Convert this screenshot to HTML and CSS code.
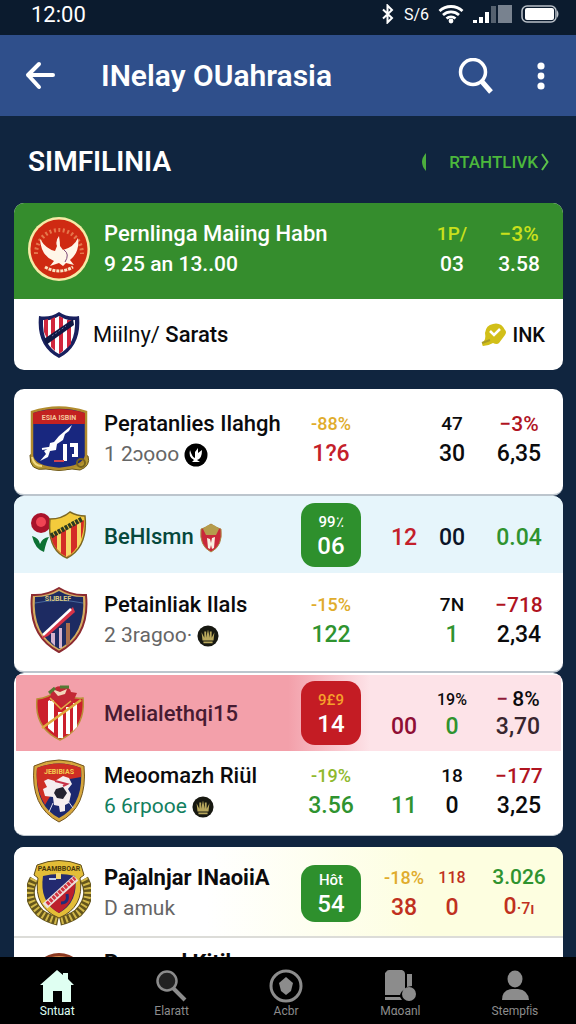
FILE: index.html
```
<!DOCTYPE html>
<html lang="id">
<head>
    <meta charset="UTF-8">
    <meta name="viewport" content="width=device-width, initial-scale=1.0">
    <title>INelay OUahrasia</title>
    <link rel="stylesheet" href="styles.css">
</head>
<body>

<div class="status-bar">
    <span class="clock">12:00</span>
    <div class="status-icons">
        <svg width="14" height="20" viewBox="0 0 14 20"><path d="M2 5.500l9 8.500-4.500 4.500V1.500L11 6l-9 8.500" fill="none" stroke="#fff" stroke-width="2"/></svg>
        <span class="network">S/6</span>
        <svg width="26" height="20" viewBox="0 0 26 20">
            <path d="M1.500 7a17 17 0 0 1 23 0M5 11a12 12 0 0 1 16 0M8.500 14.500a7 7 0 0 1 9 0" fill="none" stroke="#fff" stroke-width="2.800"/>
            <circle cx="13" cy="17" r="2.400" fill="#fff"/>
        </svg>
        <svg width="39" height="20" viewBox="0 0 39 20">
            <path d="M0 16h4v3H0zM6 13h4v6H6zM12 8h4v11h-4z" fill="#fff"/>
            <path d="M18 2h5v17h-5z" fill="#55616f"/>
            <path d="M25 1h14v18H25z" fill="#78828f"/>
        </svg>
        <svg class="battery" width="39" height="20" viewBox="0 0 39 20">
            <rect x="1" y="2" width="34" height="16" rx="5" fill="none" stroke="#b9c0c8" stroke-width="1.500"/>
            <rect x="4" y="4" width="29" height="12" rx="2" fill="#fff"/>
            <path d="M36 6q3 4 0 8z" fill="#b9c0c8"/>
        </svg>
    </div>
</div>

<header class="app-bar">
    <button class="icon-btn back" aria-label="Back">
        <svg width="30" height="30" viewBox="0 0 30 30"><path d="M14 3L3 14l11 12M3 14h25" fill="none" stroke="#fff" stroke-width="4" stroke-linejoin="round" stroke-linecap="round"/></svg>
    </button>
    <h1>INelay OUahrasia</h1>
    <button class="icon-btn search" aria-label="Search">
        <svg width="36" height="36" viewBox="0 0 36 36"><circle cx="15" cy="14" r="12.500" fill="none" stroke="#fff" stroke-width="3.500"/><path d="M23 22.500L33 34" stroke="#fff" stroke-width="5"/></svg>
    </button>
    <button class="icon-btn more" aria-label="More">
        <svg width="10" height="30" viewBox="0 0 10 30" fill="#fff"><circle cx="5" cy="5" r="3.600"/><circle cx="5" cy="15" r="3.400"/><circle cx="5" cy="25" r="3.600"/></svg>
    </button>
</header>

<main>
    <div class="section-head">
        <h2>SIMFILINIA</h2>
        <a href="#" class="live">
            <svg width="6" height="20" viewBox="0 0 6 20"><path d="M5 1Q-3 10 5 19z" fill="#4cae3e"/></svg>
            <span>RTAHTLIVK</span>
            <svg width="8" height="18" viewBox="0 0 8 18"><path d="M1 1l5.500 8L1 17" fill="none" stroke="#5cc34a" stroke-width="2"/></svg>
        </a>
    </div>

    <section class="card">
        <div class="row featured">
            <svg class="crest" width="64" height="66" viewBox="0 0 64 66">
                <ellipse cx="32" cy="33" rx="31" ry="32" fill="#f6eaa6"/>
                <ellipse cx="32" cy="33" rx="28.500" ry="29.500" fill="#cf2a12"/>
                <path d="M9 38A23 24 0 1 1 55 38" fill="none" stroke="#e5774c" stroke-width="4" stroke-dasharray="2 2.500"/>
                <path d="M13 23q6 10 15 12l2-5q-2-5 2-10 1 6 1 10l3 4q11-3 15-12 2 14-8 22l4 5-8-2-3 3-4-3-9 3 4-5q-13-5-14-22z" fill="#fff6e8"/>
                <path d="M37 34q6 4 1 12" fill="none" stroke="#7c4a78"/>
                <path d="M18 51q14 8 28 0" fill="none" stroke="#fbe3c0" stroke-width="3" stroke-dasharray="3 1"/>
            </svg>
            <div class="team">
                <div class="name">Pernlinga Maiing Habn</div>
                <div class="sub">9 25 an 13..00</div>
            </div>
            <div class="stat c3"><span class="lime">1P/</span><span>03</span></div>
            <div class="stat c4"><span class="lime">−3%</span><span>3.58</span></div>
        </div>
        <div class="row match">
            <svg class="crest" width="44" height="48" viewBox="0 0 44 48">
                <path d="M2 5q11 2 20-4 9 6 20 4 3 30-20 42Q-1 35 2 5z" fill="#18205e"/>
                <path d="M6 9q9 1 16-4 7 5 16 4 1 25-16 34Q5 34 6 9z" fill="#fff"/>
                <path d="M7 9l4-1v22l-4-9zM14 8l4-2v34l-4-4zM22 5l4 2v33l-4 3zM30 9l4 0v24l-4 4z" fill="#d1263c"/>
                <path d="M7 28L36 8l1 6L9 34z" fill="#101844"/>
                <path d="M15 25l14-10" stroke="#6974a4" stroke-dasharray="2 2"/>
            </svg>
            <div class="team"><div class="name">Miilny/ <b>Sarats</b></div></div>
            <div class="tag">
                <svg width="26" height="24" viewBox="0 0 26 24"><path d="M4 10Q5 2 12 1q8-2 12 6 2 2 0 5l-6 8q-2 2-6 0-5 3-10 3-2-2 1-5 2-2 1-8z" fill="#d2bf18"/><path d="M1 20l8-3" stroke="#a99b27" stroke-width="2"/><path d="M9 8l4 4 6-6" fill="none" stroke="#fff" stroke-width="2.500"/></svg>
                <b>INK</b>
            </div>
        </div>
    </section>

    <section class="card">
        <div class="row tall">
            <svg class="crest" width="62" height="66" viewBox="0 0 62 66">
                <path d="M2 49q5-2 8 6 21 6 42 0 2-8 8-5 3 10-8 14l-8-1q-13 3-26 0-17 3-16-14z" fill="#b59a32" stroke="#675319"/>
                <path d="M4 6Q31-3 58 6v44q-2 11-27 13Q6 61 4 50z" fill="#18277f" stroke="#b18b2d" stroke-width="2.500"/>
                <path d="M5 7q26-8 52 0v11H5z" fill="#c32120"/>
                <text x="31" y="14" class="crest-text" fill="#f3c69c">ESIA ISBIN</text>
                <path d="M44 19L31 30l-5 6-4 1-1 5-5 3 2 3-6 7 8-4 2-6 6-1 1-6 6-4 2-6 4-3z" fill="#fff"/>
                <path d="M35 38h4v17h-4zM42 37h8v14h-6v-3h2v-7h-4z" fill="#fff"/>
                <path d="M14 43l13-2" stroke="#fff" stroke-width="2"/><path d="M26 55h10" stroke="#cf4350" stroke-width="2"/>
                <circle cx="53" cy="57" r="4" fill="none" stroke="#756220" stroke-width="2"/>
                <path d="M4 51q2 9 10 9" fill="none" stroke="#f0d980" stroke-width="2"/>
            </svg>
            <div class="team">
                <div class="name">Peŗatanlies Ilahgh</div>
                <div class="sub">1 2ɔọoo
                    <svg width="24" height="24" viewBox="0 0 24 24"><circle cx="12" cy="12" r="11.500"/><path d="M6 7q2 7 5 8V9l3-4v5l4-3q0 9-5 10l3 2H8l2-2q-6-3-4-10z" fill="#fff"/></svg>
                </div>
            </div>
            <div class="stat c1"><span class="amber">-88%</span><span class="red">1?6</span></div>
            <div class="stat c3"><span class="mid">47</span><span>30</span></div>
            <div class="stat c4"><span class="crimson">−3%</span><span>6,35</span></div>
        </div>
    </section>

    <section class="card">
        <div class="row single ice">
            <svg class="crest" width="56" height="50" viewBox="0 0 56 50">
                <path d="M1 26q7 2 8 8 2-6 9-7-3 5-5 15-9-3-12-16z" fill="#0d7134"/>
                <circle cx="10" cy="13" r="10" fill="#a9122b"/><circle cx="10" cy="12" r="5" fill="#f04454"/>
                <path d="M19 9q12 0 20-7 7 4 15 4 3 31-18 42-20-8-17-39z" fill="#f3cb3c" stroke="#7d6824" stroke-width="1.500"/>
                <path d="M20 27l33-17q0 26-17 37-13-6-16-20z" fill="#d32c27"/>
                <path d="M26 24l4-2v21l-4-4zM35 19l5-2v27l-5 3zM46 14l4-2v20l-4 7z" fill="#f6d766"/>
                <path d="M20 26L51 9" stroke="#2c3b21" stroke-width="5" stroke-dasharray="3 1"/>
            </svg>
            <div class="team">
                <div class="name">BeHlsmn
                    <svg width="24" height="30" viewBox="0 0 24 30"><path d="M2 6Q7 5 12 1q5 4 10 5 2 17-10 23Q0 23 2 6z" fill="#c9283a" stroke="#a98a43"/><path d="M4 6q8-9 16 0l-3 6H7z" fill="#b59c4c"/><path d="M8 15l3 1 1 4 1-5 3-1-1 11-2 1-1-4-1 4-2-1z" fill="#f8eedf"/></svg>
                </div>
            </div>
            <div class="badge green-bg"><small>99٪</small><span>06</span></div>
            <div class="stat c2"><span class="red">12</span></div>
            <div class="stat c3"><span class="navy">00</span></div>
            <div class="stat c4"><span class="green">0.04</span></div>
        </div>
        <div class="row">
            <svg class="crest" width="58" height="66" viewBox="0 0 58 66">
                <path d="M2 8q14 1 27-7 13 8 27 7 4 41-27 57Q-2 49 2 8z" fill="#d4ac61" stroke="#8c2b31" stroke-width="2"/>
                <path d="M5 10q14 0 24-6 10 6 24 6 3 37-24 52Q2 47 5 10z" fill="#1d2b62"/>
                <path d="M5 16q24-5 48 0" fill="none" stroke="#47679b"/>
                <text x="28" y="14" class="crest-text" fill="#dbc980">SIJBLEF</text>
                <path d="M43 20L15 46l-4 6 7-3 27-24z" fill="#d63347"/><path d="M41 22L13 48" stroke="#fff" stroke-width="2.500"/>
                <path d="M21 46h4v13l-4-4zM29 41h3v20h-3z" fill="#d3b2ce"/><path d="M36 36h4v20l-4 3z" fill="#a96e4d"/>
            </svg>
            <div class="team">
                <div class="name">Petainliak Ilals</div>
                <div class="sub">2 3ragoo·
                    <svg width="22" height="24" viewBox="0 0 24 24"><circle cx="12" cy="12" r="11.500" fill="#171811"/><path d="M5 8l3 6V7h2v7l2-9 2 9V7h2v7l3-6-1 9H6zM7 18h10v2H7z" fill="#b8a75c"/></svg>
                </div>
            </div>
            <div class="stat c1"><span class="amber">-15%</span><span class="green">122</span></div>
            <div class="stat c3"><span class="mid">7N</span><span class="green">1</span></div>
            <div class="stat c4"><span class="crimson">−718</span><span>2,34</span></div>
        </div>
    </section>

    <section class="card last-group">
        <div class="row single pink">
            <svg class="crest" width="48" height="56" viewBox="0 0 48 56">
                <path d="M1 14q12-1 22-10 11 11 24 9 3 30-23 42Q-2 43 1 14z" fill="#cb1f2c" stroke="#ba9038" stroke-width="1.500"/>
                <path d="M12 16l6-3v35l-6-5zM22 27h5v26h-5zM30 22h4v27h-4zM37 18h4v24l-4 4z" fill="#fff"/>
                <path d="M6 43L45 15" stroke="#dfaa3e" stroke-width="2.500"/>
                <path d="M15 7q5-8 13-5 6 0 7 5l6 1-4 9-8 5-9-7-6 1z" fill="#c22835"/><path d="M16 4l8 3 7-3-2 5-7 2z" fill="#f2d7ba"/>
                <path d="M13 8l6-5M24 2h9" stroke="#557a34" stroke-width="3"/><path d="M14 13l11 11 10-8" fill="none" stroke="#e1af47" stroke-width="1.500"/>
            </svg>
            <div class="team"><div class="name">Melialethqi15</div></div>
            <div class="badge red-bg"><small>9£9</small><span>14</span></div>
            <div class="stat c2"><span></span><span class="wine">00</span></div>
            <div class="stat c3"><span class="tiny">19%</span><span class="green">0</span></div>
            <div class="stat c4"><span><i>−</i>8%</span><span class="soft">3,70</span></div>
        </div>
        <div class="row">
            <svg class="crest" width="54" height="64" viewBox="0 0 54 64">
                <path d="M2 7Q27-5 52 7q4 42-25 56Q-2 48 2 7z" fill="#d6a63c" stroke="#73551e"/>
                <path d="M5 9q22-9 44 0 3 38-22 50Q2 46 5 9z" fill="#1c286e"/>
                <path d="M5 9q22-9 44 0v9L27 22 13 46Q3 30 5 9z" fill="#ce2e24"/>
                <text x="27" y="15" class="crest-text" fill="#f3cd50">JEBIBIAS</text>
                <path d="M12 22l4-2 7 2 8-5 6 2 3 6-4 5 3 5-2 9-4 2v6l-5 1-1-6-5-1-1-8-8-1-2-7 4-2z" fill="#f5edef"/>
                <path d="M24 30l7-2 4 6-4 6-6-1-3-5z" fill="#242230"/><path d="M23 22l12 3-4 2" fill="none" stroke="#c73247" stroke-width="2"/><path d="M17 53l4-9M36 42l5 7" stroke="#d9d9e9"/>
            </svg>
            <div class="team">
                <div class="name">Meoomazh Riül</div>
                <div class="sub teal">6 6rpooe
                    <svg width="22" height="24" viewBox="0 0 24 24"><circle cx="12" cy="12" r="11.500" fill="#171811"/><path d="M5 8l3 6V7h2v7l2-9 2 9V7h2v7l3-6-1 9H6zM7 18h10v2H7z" fill="#b8a75c"/></svg>
                </div>
            </div>
            <div class="stat c1"><span class="olive">-19%</span><span class="green">3.56</span></div>
            <div class="stat c2"><span></span><span class="green">11</span></div>
            <div class="stat c3"><span class="mid">18</span><span>0</span></div>
            <div class="stat c4"><span class="crimson">−177</span><span>3,25</span></div>
        </div>
    </section>

    <section class="card">
        <div class="row single cream">
            <svg class="crest" width="64" height="66" viewBox="0 0 64 66">
                <path d="M7 19q-10 18 6 34 8 6 18 8" fill="none" stroke="#64551c" stroke-width="9"/><path d="M57 19q10 18-6 34-8 6-18 8" fill="none" stroke="#64551c" stroke-width="9"/>
                <path d="M7 19q-10 18 6 34 8 6 18 8M57 19q10 18-6 34-8 6-18 8" fill="none" stroke="#d2b849" stroke-width="7" stroke-dasharray="2 2.500"/>
                <path d="M10 5q22-9 44 0l3 10-4 3q5 29-21 40Q6 47 11 18l-4-3z" fill="#e3bd37" stroke="#5e4c1c"/>
                <path d="M16 16q16-4 32 0 4 26-16 37-20-11-16-37z" fill="#232a70"/>
                <path d="M48 19q2 22-16 34-8-4-12-12z" fill="#bd202c"/>
                <path d="M18 46l31-28" stroke="#ece1dc" stroke-width="7"/><path d="M20 44l28-26" stroke="#d23440" stroke-width="4" stroke-dasharray="3 1"/>
                <path d="M29 13h5v6h-5z" fill="#f4d66e"/><path d="M22 19h7" stroke="#bac9ee" stroke-width="2"/><path d="M40 34q2 9-6 9" fill="none" stroke="#202c78" stroke-width="3"/>
                <text x="32" y="11" class="crest-text" fill="#49380c">PAAMBBOAR</text>
            </svg>
            <div class="team">
                <div class="name strong">Paĵalnjar INaoiiA</div>
                <div class="sub">D amuk</div>
            </div>
            <div class="badge green-bg short"><small>Hôt</small><span>54</span></div>
            <div class="stat c2"><span class="amber">-18%</span><span class="rust">38</span></div>
            <div class="stat c3"><span class="tiny rust">118</span><span class="rust">0</span></div>
            <div class="stat c4"><span class="green">3.026</span><span class="rust">0<small>·7ı</small></span></div>
        </div>
        <div class="row next">
            <svg class="crest" width="56" height="56" viewBox="0 0 56 56"><circle cx="28" cy="28" r="27" fill="#8b3921"/><circle cx="28" cy="29" r="24" fill="none" stroke="#d68b50" stroke-width="2"/></svg>
            <div class="team"><div class="name strong">Pergqed Kitibe</div></div>
        </div>
    </section>
</main>

<nav class="tab-bar">
    <a href="#" class="active">
        <svg width="34" height="34" viewBox="0 0 34 34"><path d="M17 1l6 5V4h5v6l6 6h-3v17h-9V22h-9v11H3V16H0z" fill="currentColor"/></svg>
        <span>Sntuat</span>
    </a>
    <a href="#">
        <svg width="34" height="34" viewBox="0 0 34 34"><circle cx="12" cy="12" r="9.500" fill="#222" stroke="currentColor" stroke-width="2.500"/><path d="M18 19l12 12" stroke="currentColor" stroke-width="4"/></svg>
        <span>Elaratt</span>
    </a>
    <a href="#">
        <svg width="34" height="34" viewBox="0 0 34 34"><circle cx="17" cy="17" r="15" fill="none" stroke="currentColor" stroke-width="3"/><path d="M17 8l7 6-2 8-5 4-5-4-2-8z" fill="currentColor"/></svg>
        <span>Acbr</span>
    </a>
    <a href="#">
        <svg width="34" height="34" viewBox="0 0 34 34" fill="currentColor"><path d="M3 3q1-2 3-2h13q3 1 3 4v15q-4 2-5 6H2V4zM24 5h5v12l-5 1zM2 28h15l2 3H2z"/><circle cx="26" cy="25" r="7"/></svg>
        <span>Mαoanl</span>
    </a>
    <a href="#">
        <svg width="34" height="34" viewBox="0 0 34 34" fill="currentColor"><ellipse cx="17" cy="10" rx="7.500" ry="8.500"/><path d="M4 31q0-10 10-11h6q10 1 11 11z"/></svg>
        <span>Stempfi̇s</span>
    </a>
</nav>

</body>
</html>
```
FILE: styles.css
```
* {
    box-sizing: border-box;
}
body {
    margin: 0;
    height: 100vh;
    display: flex;
    flex-direction: column;
    overflow: hidden;
    font-family: Roboto, "Liberation Sans", sans-serif;
    color: #0b0b0d;
    background-color: #10253f;
}
h1, h2 {
    margin: 0;
    color: #fff;
}
a {
    text-decoration: none;
}
svg {
    flex: none;
}

/* top bars */
.status-bar {
    flex: none;
    display: flex;
    justify-content: space-between;
    align-items: center;
    height: 35px;
    padding: 0 16px 7px 31px;
    color: #fff;
    background-color: #0b1b2e;
}
.clock {
    font-size: 22px;
}
.status-icons {
    display: flex;
    align-items: center;
    gap: 9px;
}
.network {
    font-size: 16px;
}
.app-bar {
    flex: none;
    display: flex;
    align-items: center;
    height: 81px;
    padding: 0 30px 0 25px;
    background-color: #2f4f8b;
}
.app-bar h1 {
    flex: 1;
    padding-left: 46px;
    font-size: 30px;
    font-weight: 600;
}
.icon-btn {
    display: flex;
    padding: 0;
    border: none;
    background: none;
    cursor: pointer;
}
.search {
    margin-right: 42px;
}

/* list */
main {
    flex: 1;
    min-height: 0;
    overflow: hidden;
    padding: 0 13px 0 14px;
}
.section-head {
    display: flex;
    justify-content: space-between;
    align-items: center;
    height: 87px;
    padding: 4px 14px 0 14px;
}
.section-head h2 {
    font-size: 28px;
    font-weight: 600;
}
.live {
    display: flex;
    align-items: center;
    color: #4cb83c;
    font-size: 17px;
    font-weight: 500;
}
.live span {
    margin: 0 3px 0 22px;
}
.card {
    overflow: hidden;
    border-radius: 10px;
    background-color: #fff;
}
.card:nth-of-type(1) {
    margin-bottom: 19px;
}
.card:nth-of-type(2),
.card:nth-of-type(3) {
    border-bottom: 2px solid #bcc5cd;
}
.last-group {
    margin-bottom: 11px;
    padding-top: 2px;
    border-bottom: 1px solid #bcc5cd;
}
.row {
    display: grid;
    grid-template-columns: 90px minmax(0, 1fr) 60px 68px 46px 88px;
    align-items: center;
    height: 98px;
    padding-bottom: 4px;
    line-height: 30px;
}
.crest {
    grid-column: 1;
    justify-self: center;
}
.crest-text {
    font-size: 7px;
    font-weight: 700;
    text-anchor: middle;
}
.team {
    grid-column: 2;
    white-space: nowrap;
}
.name {
    font-size: 22px;
    font-weight: 500;
}
.sub {
    color: #666;
    font-size: 21px;
}
.name svg,
.sub svg {
    vertical-align: middle;
}
.strong {
    font-weight: 700;
}
.stat {
    display: flex;
    flex-direction: column;
    align-items: center;
    min-width: 0;
    font-size: 23px;
    font-weight: 500;
    white-space: nowrap;
}
.stat span {
    min-height: 30px;
}
.stat span:first-child:not(:last-child) {
    font-size: 19px;
}
.c1 span:first-child:not(:last-child),
.c2 span:first-child:not(:last-child) {
    font-size: 18px;
}
.stat .tiny:first-child:not(:last-child) {
    font-size: 16px;
}
.stat small {
    font-size: 16px;
}
.stat i {
    margin-right: 4px;
    color: #8f1b39;
    font-style: normal;
}
.c1 {
    grid-column: 3;
}
.c2 {
    grid-column: 4;
    padding-left: 18px;
}
.c3 {
    grid-column: 5;
}
.stat.c4 {
    grid-column: 6;
}
.stat.c4 span:first-child:not(:last-child) {
    font-size: 21px;
}

/* row kinds */
.featured {
    height: 96px;
    color: #fff;
    background-color: #358d2d;
}
.featured .team {
    grid-column: 2 / 5;
}
.featured .sub {
    color: #fff;
    font-weight: 500;
}
.featured .stat {
    font-size: 21px;
}
.match {
    grid-template-columns: 79px 1fr auto;
    height: 71px;
    padding: 0 18px 0 0;
}
.match .crest {
    margin-left: 11px;
}
.match .name {
    font-weight: 400;
}
.match b {
    font-weight: 500;
}
.tag {
    display: flex;
    align-items: center;
    gap: 6px;
    font-size: 20px;
}
.tall {
    height: 105px;
    padding-bottom: 6px;
}
.single {
    height: 77px;
    padding-bottom: 0;
}
.ice {
    background-color: #e6f5fb;
}
.ice .name {
    color: #06483c;
}
.ice .team,
.ice .stat {
    padding-top: 6px;
}
.pink {
    margin: 0 2px;
    grid-template-columns: 88px minmax(0, 1fr) 60px 68px 46px 86px;
    height: 76px;
    line-height: 27px;
    background-image: linear-gradient(90deg, #f3a0aa 0%, #f3a0aa 50%, #fde3e8 65%);
}
.pink .name {
    color: #471b32;
}
.pink .stat span {
    min-height: 27px;
}
.last-group .row:last-child {
    height: 84px;
}
.cream {
    height: 91px;
    padding-top: 3px;
    border-bottom: 2px solid #dcdcd8;
    background-image: linear-gradient(90deg, #fff 35%, #fdfee0 75%);
}
.next {
    height: 84px;
    padding: 0;
}
.next .team {
    align-self: start;
    padding-top: 10px;
}

/* score badge */
.badge {
    grid-column: 3;
    display: flex;
    flex-direction: column;
    align-items: center;
    justify-content: center;
    height: 64px;
    border-radius: 14px;
    color: #fff;
    font-size: 24px;
    font-weight: 500;
    line-height: 26px;
}
.badge small {
    font-size: 15px;
    line-height: 22px;
}
.short {
    height: 57px;
}
.green-bg {
    background-color: #2e902d;
}
.red-bg {
    background-color: #c41c24;
}
.red-bg small {
    color: #f6a12b;
}

/* figures */
.lime { color: #c9e01c; }
.amber { color: #e0ac2c; }
.olive { color: #8fb92e; }
.green { color: #2f932f; }
.teal { color: #12805f; }
.red { color: #c4202a; }
.crimson { color: #b0141f; }
.rust { color: #c03020; }
.wine { color: #8f0f35; }
.navy { color: #0a1428; }
.soft { color: #38262e; }

/* bottom tabs */
.tab-bar {
    flex: none;
    display: flex;
    height: 67px;
    padding-right: 4px;
    background-color: #000;
}
.tab-bar a {
    flex: 1;
    display: flex;
    flex-direction: column;
    align-items: center;
    padding-top: 12px;
    color: #8c8c8c;
    font-size: 12px;
    line-height: 16px;
}
.tab-bar .active {
    color: #dffff2;
}
```
